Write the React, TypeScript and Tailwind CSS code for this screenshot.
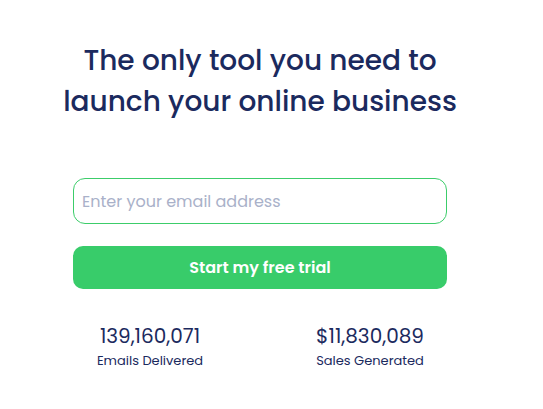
import { FC } from 'react';

const stats = [
  { value: '139,160,071', label: 'Emails Delivered' },
  { value: '$11,830,089', label: 'Sales Generated' },
];

const App: FC = () => {
  return (
    <div className="min-h-screen bg-white font-['Poppins','Inter',sans-serif] text-[#1b2a5e]">
      <div className="w-[520px] flex flex-col items-center pt-[40px]">
        <h1 className="text-[28px] leading-[41px] font-medium text-center">
          The only tool you need to
          <br />
          launch your online business
        </h1>

        <div className="w-[374px] mt-[56px] flex flex-col gap-[22px]">
          <input
            type="email"
            placeholder="Enter your email address"
            className="h-[46px] w-full rounded-[12px] border border-[#3ccd6a] pl-[8px] pr-[9px] text-[16px] outline-none placeholder:text-[#a9b1c9]"
          />
          <button className="h-[43px] w-full rounded-[10px] bg-[#38cc6a] text-white text-[16px] font-semibold">
            Start my free trial
          </button>
        </div>

        <div className="mt-[33px] flex gap-[60px]">
          {stats.map((s, i) => (
            <div key={i} className="w-[160px] flex flex-col items-center">
              <div className="text-[20px] leading-[28px]">{s.value}</div>
              <div className="text-[13px] leading-[20px] mt-[1px]">{s.label}</div>
            </div>
          ))}
        </div>
      </div>
    </div>
  );
};

export default App;
